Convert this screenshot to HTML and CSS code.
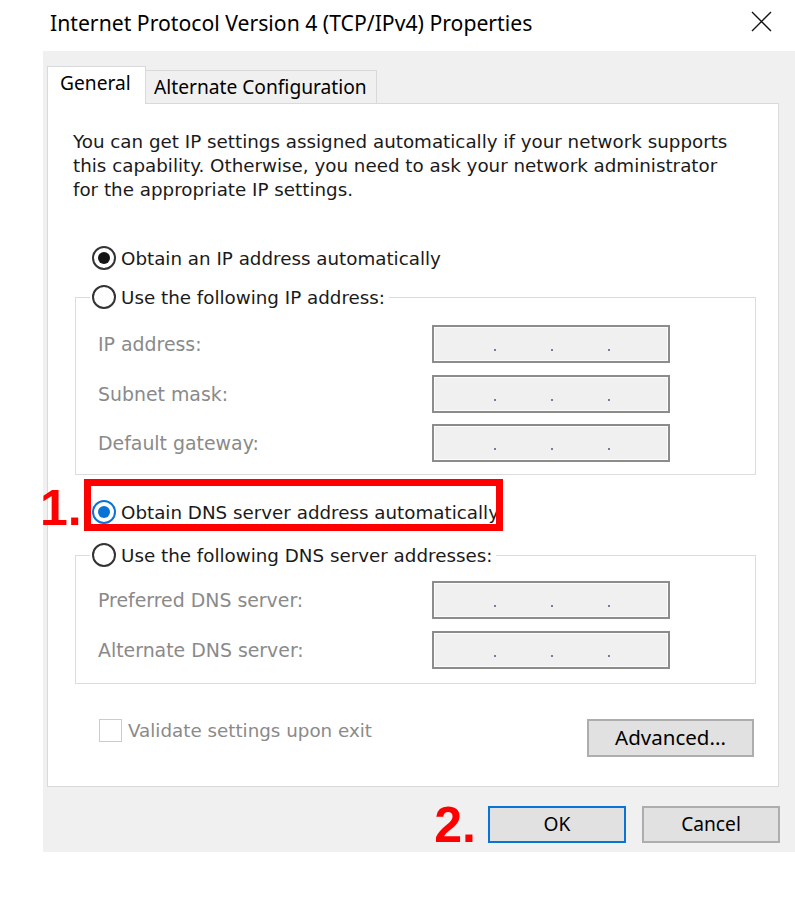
FILE: index.html
```html
<!DOCTYPE html>
<html lang="en">
<head>
<meta charset="utf-8">
<title>Internet Protocol Version 4 (TCP/IPv4) Properties</title>
<link rel="stylesheet" href="styles.css">
</head>
<body>
<div class="window">
  <div class="titlebar">
    <span class="title">Internet Protocol Version 4 (TCP/IPv4) Properties</span>
    <svg class="close" viewBox="0 0 21 21" aria-label="Close"><path d="M1 1 L20 20 M20 1 L1 20" stroke="#111" stroke-width="1.4" fill="none"/></svg>
  </div>
  <div class="body">
    <div class="tabs">
      <div class="tab active">General</div>
      <div class="tab">Alternate Configuration</div>
    </div>
    <div class="panel">
      <p class="intro">You can get IP settings assigned automatically if your network supports<br>this capability. Otherwise, you need to ask your network administrator<br>for the appropriate IP settings.</p>

      <div class="radio-row first"><span class="radio on"></span><span>Obtain an IP address automatically</span></div>

      <fieldset class="group ip-group">
        <legend><span class="radio-row"><span class="radio"></span><span>Use the following IP address:</span></span></legend>
        <div class="fields">
          <span class="flabel">IP address:</span><div class="ipbox"><i></i><i></i><i></i></div>
          <span class="flabel">Subnet mask:</span><div class="ipbox"><i></i><i></i><i></i></div>
          <span class="flabel">Default gateway:</span><div class="ipbox"><i></i><i></i><i></i></div>
        </div>
      </fieldset>

      <div class="radio-row dns-auto">
        <span class="mark-num one">1.</span>
        <span class="mark-box"></span>
        <span class="radio on blue"></span><span>Obtain DNS server address automatically</span>
      </div>

      <fieldset class="group dns-group">
        <legend><span class="radio-row"><span class="radio"></span><span>Use the following DNS server addresses:</span></span></legend>
        <div class="fields">
          <span class="flabel">Preferred DNS server:</span><div class="ipbox"><i></i><i></i><i></i></div>
          <span class="flabel">Alternate DNS server:</span><div class="ipbox"><i></i><i></i><i></i></div>
        </div>
      </fieldset>

      <div class="options">
        <div class="check-row"><span class="checkbox"></span><span>Validate settings upon exit</span></div>
        <button class="btn advanced">Advanced...</button>
      </div>
    </div>
    <div class="footer">
      <span class="mark-num two">2.</span>
      <button class="btn ok">OK</button>
      <button class="btn cancel">Cancel</button>
    </div>
  </div>
</div>
</body>
</html>
```

FILE: styles.css
```css
* { box-sizing: border-box; }
html, body { margin: 0; padding: 0; background: #fff; }
body {
  width: 795px;
  height: 897px;
  overflow: hidden;
  font-family: "DejaVu Sans", sans-serif;
  font-size: 18.3px;
  color: #1a1a1a;
}
.window { margin-left: 43px; width: 752px; }

.titlebar {
  height: 51px;
  display: flex;
  align-items: center;
  justify-content: space-between;
  padding: 0 23px 0 7px;
}
.title {
  font-family: "Noto Sans", sans-serif;
  font-size: 21.2px;
  color: #000;
  margin-top: -6px;
  white-space: nowrap;
}
.close { width: 21px; height: 21px; margin-top: -8px; }

.body {
  background: #f0f0f0;
  height: 801px;
  padding: 15px 16px 0 4px;
}

.tabs {
  display: flex;
  align-items: flex-end;
  height: 37px;
  position: relative;
  z-index: 1;
}
.tab {
  font-family: "Noto Sans", sans-serif;
  font-size: 19.2px;
  color: #000;
  height: 33px;
  width: 231px;
  border: 1px solid #d9d9d9;
  border-bottom: none;
  border-left: none;
  background: #f0f0f0;
  padding: 0 0 2px 8px;
  display: flex;
  align-items: center;
  white-space: nowrap;
}
.tab.active {
  width: 99px;
  height: 38px;
  margin-bottom: -1px;
  background: #fff;
  border-left: 1px solid #d9d9d9;
  padding: 0 0 6px 12px;
}

.panel {
  height: 684px;
  background: #fff;
  border: 1px solid #d9d9d9;
  display: flex;
  flex-direction: column;
}
.intro {
  margin: 26px 0 0 25px;
  line-height: 24px;
  white-space: nowrap;
}

.radio-row {
  display: flex;
  align-items: center;
  gap: 5px;
  height: 24px;
  white-space: nowrap;
}
.radio-row.first { margin: 44px 0 0 44px; }
.radio {
  flex: none;
  width: 24px;
  height: 24px;
  border-radius: 50%;
  border: 2px solid #333;
  background: #fff;
  position: relative;
}
.radio.on::after {
  content: "";
  position: absolute;
  inset: 4px;
  border-radius: 50%;
  background: #151515;
}
.radio.blue { border-color: #0a74d6; }
.radio.blue::after { background: #0a74d6; }

.group {
  margin: 0 22px 0 27px;
  padding: 0 0 0 22px;
  border: 1px solid #dcdcdc;
  min-width: 0;
}
.group legend {
  padding: 0 4px 0 2px;
  margin-left: -8px;
}
.ip-group { margin-top: 15px; padding-top: 16px; padding-bottom: 12px; }
.dns-group { margin-top: 19px; padding-top: 14px; padding-bottom: 14px; }

.fields {
  display: grid;
  grid-template-columns: 334px 238px;
  align-items: center;
}
.ip-group .fields { row-gap: 11.5px; }
.dns-group .fields { row-gap: 12px; }
.flabel { color: #8a8a8a; font-size: 18.9px; white-space: nowrap; }
.ipbox {
  height: 38px;
  background: #f0f0f0;
  border: 2px solid #8c8c8c;
  box-shadow: inset 0 0 0 1px #fbfbfb;
  display: flex;
  align-items: flex-start;
  gap: 55px;
  padding: 22px 0 0 60px;
}
.ipbox i {
  display: block;
  width: 2px;
  height: 2px;
  background: #7b7b98;
}

.dns-auto { margin: 25px 0 0 44px; position: relative; }
.mark-box {
  position: absolute;
  left: -8px;
  top: -21px;
  width: 419px;
  height: 52px;
  border: 7px solid #f00;
}
.mark-num {
  position: absolute;
  font-family: "Liberation Sans", sans-serif;
  font-weight: bold;
  font-size: 50px;
  line-height: 50px;
  color: #f00;
}
.mark-num.one { left: -52px; top: -17.5px; }

.options {
  margin: 35px 24px 0 51px;
  display: flex;
  justify-content: space-between;
  align-items: flex-start;
}
.check-row {
  display: flex;
  align-items: center;
  gap: 6px;
  color: #8a8a8a;
  height: 23px;
  white-space: nowrap;
}
.checkbox {
  width: 23px;
  height: 23px;
  border: 1px solid #cccccc;
  background: #fff;
}

.btn {
  font-family: "Noto Sans", sans-serif;
  font-size: 19.2px;
  color: #000;
  background: #e1e1e1;
  border: 2px solid #adadad;
  padding: 0 0 2px;
  margin: 0;
}
.advanced { width: 167px; height: 38px; font-size: 20.5px; }

.footer {
  position: relative;
  display: flex;
  justify-content: flex-end;
  gap: 16px;
  padding-top: 19px;
  margin-right: -1px;
}
.ok, .cancel { width: 138px; height: 37px; }
.ok { border-color: #0a74d6; }
.mark-num.two { right: 304px; top: 12.5px; }
```
